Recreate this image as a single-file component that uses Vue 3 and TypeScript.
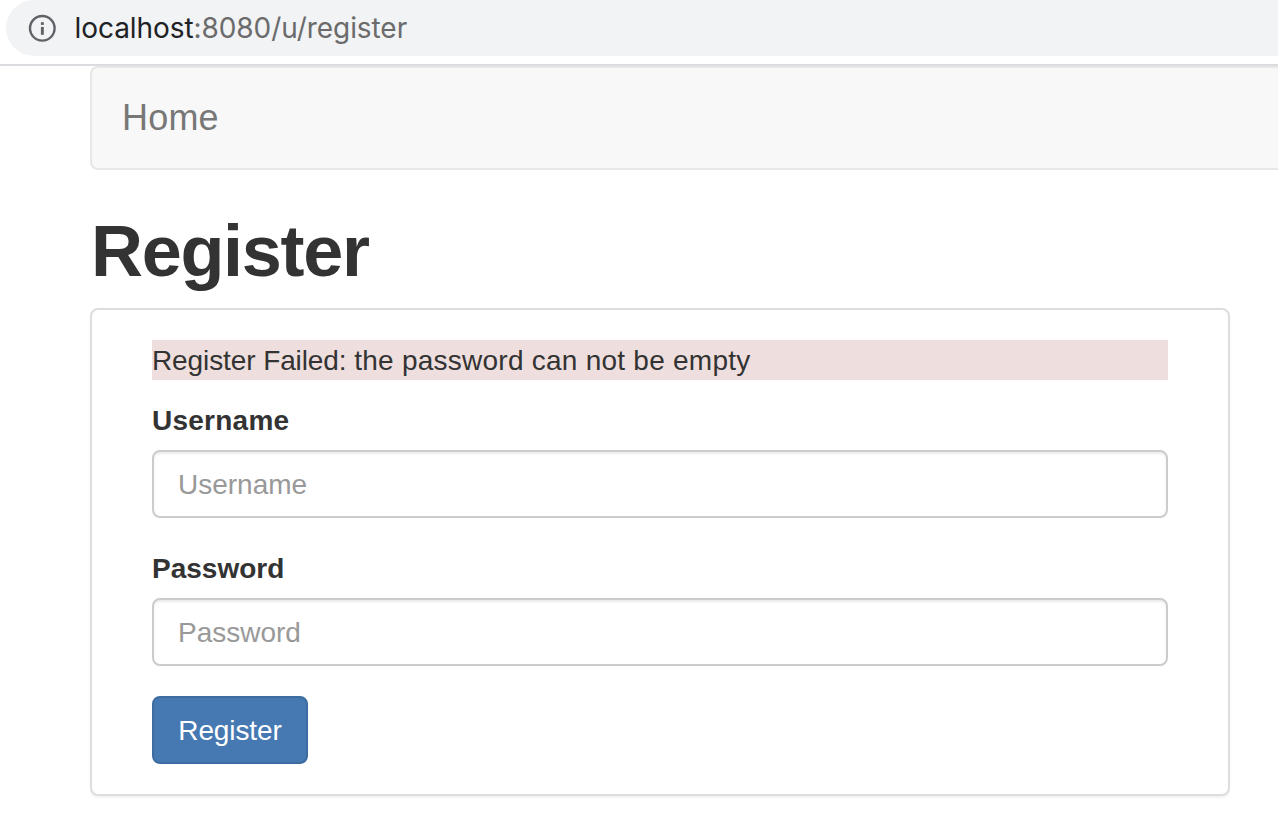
<script setup lang="ts">
import { ref } from 'vue'

const username = ref<string>('')
const password = ref<string>('')
const errorTitle = ref<string>('Register Failed: ')
const errorReason = ref<string>('the password can not be empty')
</script>

<template>
  <div class="window">
    <header class="toolbar">
      <div class="omnibox">
        <svg class="info" viewBox="0 0 28 28" width="28" height="28" fill="none">
          <circle cx="14.3" cy="14.3" r="12.3" stroke="#5f6368" stroke-width="2.4" />
          <rect x="12.9" y="12.9" width="2.9" height="7.9" fill="#5f6368" />
          <rect x="12.9" y="8.2" width="2.9" height="2.7" fill="#5f6368" />
        </svg>
        <span class="url"><span class="host">localhost</span>:8080/u/register</span>
      </div>
    </header>
    <main class="page">
      <nav class="navbar"><a class="brand">Home</a></nav>
      <h1>Register</h1>
      <form class="panel" @submit.prevent>
        <div class="error"><span class="error-title">{{ errorTitle }}</span><span class="error-reason">{{ errorReason }}</span></div>
        <label class="name-label" for="username">Username</label>
        <input id="username" v-model="username" type="text" placeholder="Username" />
        <label for="password">Password</label>
        <input id="password" v-model="password" type="password" placeholder="Password" />
        <button type="submit">Register</button>
      </form>
    </main>
  </div>
</template>

<style>
body {
  overflow: hidden;
  background: #fff;
}
</style>

<style scoped>
.window {
  width: 1278px;
  height: 836px;
  overflow: hidden;
  background: #fff;
  color: #333;
  font: 28px/42px "Liberation Sans", Arial, sans-serif;
}
.window *,
.window {
  box-sizing: border-box;
}
.toolbar {
  height: 66px;
  padding-left: 6px;
  border-bottom: 2px solid #dadce0;
}
.omnibox {
  display: flex;
  align-items: center;
  height: 56px;
  padding-left: 22px;
  border-radius: 28px 0 0 28px;
  background: #f1f3f4;
}
.info {
  display: block;
}
.url {
  margin-left: 18.5px;
  color: #6b6b6c;
  font: 28px/40px Inter, sans-serif;
  letter-spacing: -0.07px;
  white-space: nowrap;
}
.host {
  color: #202124;
}
.page {
  width: 1188px;
  margin-left: 90px;
}
.navbar {
  display: flex;
  align-items: center;
  height: 104px;
  padding-left: 30px;
  border: 2px solid #e7e7e7;
  border-right: 0;
  border-radius: 8px 0 0 8px;
  background: #f8f8f8;
}
.brand {
  color: #777;
  font-size: 36px;
  letter-spacing: 0.2px;
}
h1 {
  margin: 40px 0 18px;
  padding-left: 1px;
  height: 80px;
  font-size: 72px;
  line-height: 82px;
  font-weight: 700;
  letter-spacing: -1.3px;
}
.panel {
  display: flex;
  flex-direction: column;
  align-items: stretch;
  width: 1140px;
  height: 488px;
  padding: 30px 60px;
  border: 2px solid #ddd;
  border-radius: 8px;
  box-shadow: 0 2px 2px rgba(0, 0, 0, 0.05);
}
.error {
  height: 40px;
  margin-bottom: 20px;
  background: #eedfde;
  white-space: pre;
}
.error-title {
  letter-spacing: -0.1px;
}
.error-reason {
  letter-spacing: 0.25px;
}
label {
  height: 40px;
  margin-bottom: 10px;
  font-weight: 700;
}
.name-label {
  letter-spacing: 0.25px;
}
input {
  width: 1016px;
  height: 68px;
  margin: 0 0 30px;
  padding: 2px 24px 0;
  border: 2px solid #ccc;
  border-radius: 8px;
  outline: 0;
  background: #fff;
  box-shadow: inset 0 2px 2px rgba(0, 0, 0, 0.075);
  color: #555;
  font: 28px/40px "Liberation Sans", Arial, sans-serif;
}
input::placeholder {
  color: #999;
  opacity: 1;
}
button {
  align-self: flex-start;
  width: 156px;
  height: 68px;
  padding: 2px 0 0;
  border: 2px solid #3c6ca0;
  border-radius: 8px;
  background: #4678b2;
  color: #fff;
  font: 28px/40px "Liberation Sans", Arial, sans-serif;
  letter-spacing: -0.1px;
}
</style>
